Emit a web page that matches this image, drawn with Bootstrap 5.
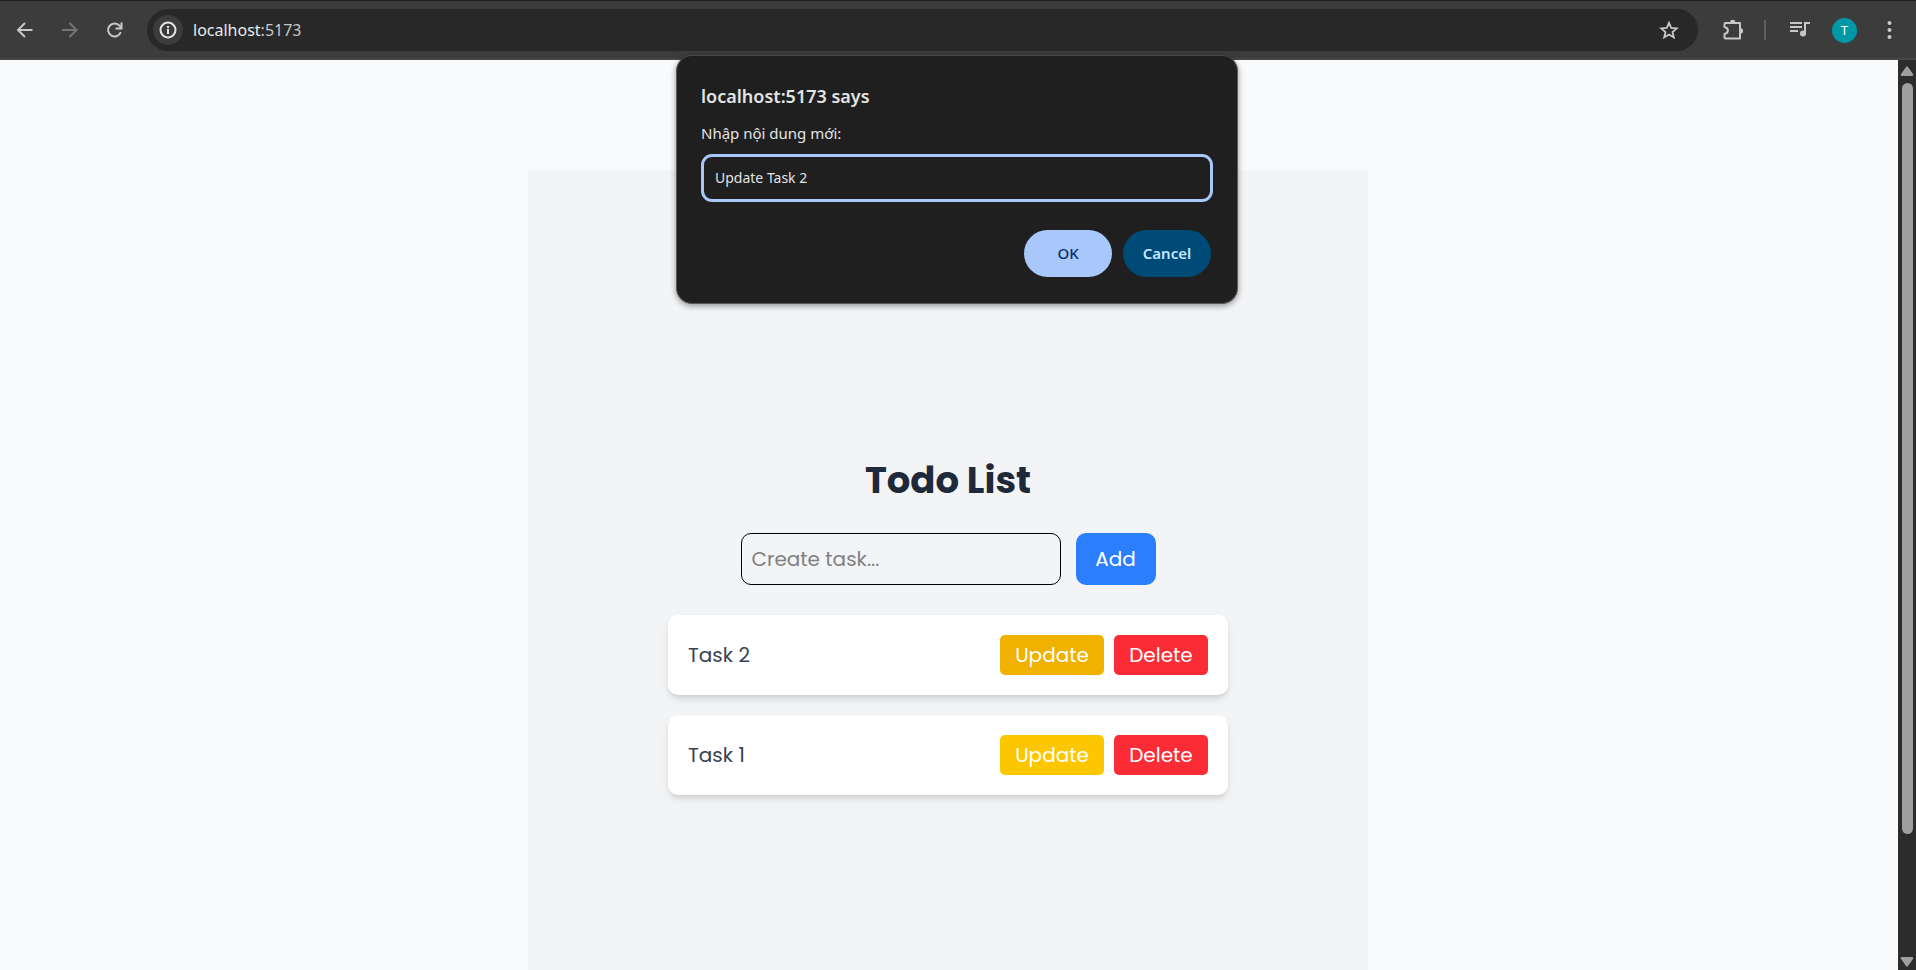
<!DOCTYPE html>
<html lang="vi">
<head>
<meta charset="utf-8">
<meta name="viewport" content="width=device-width, initial-scale=1">
<title>Todo List</title>
<link href="https://cdn.jsdelivr.net/npm/bootstrap@5.3.0/dist/css/bootstrap.min.css" rel="stylesheet">
<style>
  body { font-family: Poppins, Inter, "Noto Sans", sans-serif; font-size: 20px; line-height: 30px; background: #f9fafb; color: #364153; }
  .chrome-text { font-family: "Segoe UI", "Noto Sans", "Open Sans", sans-serif; }

  .toolbar { height: 60px; padding: 1px 14px 0 12px; gap: 21px; background: #3c3c3c; color: #c7c7c7; border-top: 1px solid #1f1f1f; border-bottom: 2px solid #474747; }
  .tool-btn { width: 24px; height: 24px; color: inherit; }
  .tool-btn svg, .site-info svg { display: block; }
  .tool-btn:disabled { color: #757575; opacity: 1; border: 0; }
  .omnibox { height: 42px; padding: 0 17px 0 6px; background: #282828; }
  .site-info { width: 30px; height: 30px; background: #3c3c3c; color: #e3e3e3; }
  .address { font-size: 16px; line-height: 24px; color: #c7c7c7; margin-left: 10px; }
  .address span { color: #e8eaed; }
  .tool-divider { width: 2px; height: 20px; background: #5e5e5e; }
  .avatar { width: 25px; height: 25px; background: #0097a7; color: #fff; font-family: Roboto, sans-serif; font-size: 13px; line-height: 25px; }

  .page-view { background: #f9fafb; padding: 110px 2px 0 0; }
  .todo-panel { width: 100%; max-width: 840px; padding: 288px 140px 0; background: #f3f4f6; }
  .todo-title { font-size: 37px; line-height: 45px; font-weight: 700; color: #1e2939; margin-bottom: 30px; }
  .todo-form { gap: 15px; margin-bottom: 30px; }
  .task-input { width: 320px; height: 52px; padding: 10px; border: 1px solid #000; border-radius: 10px; background: transparent; color: #364153; font-size: 20px; line-height: 30px; }
  .task-input::placeholder { color: #7f8083; opacity: 1; }
  .add-btn { width: 80px; height: 52px; border-radius: 10px; background: #2b7fff; color: #fff; }
  .task-list { gap: 20px; }
  .task-item { padding: 20px; border-radius: 10px; background: #fff; box-shadow: 0 5px 8px -1px rgba(0,0,0,.1), 0 3px 5px -2px rgba(0,0,0,.1); }
  .task-actions { gap: 10px; }
  .task-btn { height: 40px; border-radius: 5px; color: #fff; padding: 5px 0; }
  .update-btn { width: 104px; background: #fdc700; }
  .update-btn.is-hovered { background: #f0b100; }
  .delete-btn { width: 94px; background: #fb2c36; }

  .scroll-rail { width: 18px; background: #2c2c2c; padding: 6px 0 3px; gap: 7px; }
  .scroll-track { width: 11px; }
  .scroll-thumb { flex: 751 1 0; border-radius: 6px; background: #9f9f9f; }
  .scroll-rest { flex: 116 1 0; }

  .dialog-layer { top: 55px; left: 0; right: 0; padding-right: 2px; pointer-events: none; z-index: 10; }
  .prompt-box { width: 562px; padding: 24px 24px 26px; border: 1px solid #5a5a5a; border-top-color: #474747; border-radius: 16px; background: #1f1f1f; color: #e3e3e3; box-shadow: 0 2px 6px rgba(0,0,0,.4); pointer-events: auto; }
  .prompt-title { font-size: 18px; line-height: 32px; font-weight: 600; margin-bottom: 6px; }
  .prompt-label { font-size: 15px; line-height: 30px; margin-bottom: 6px; }
  .prompt-input { height: 48px; padding: 0 11px 2px; border: 3px solid #a8c7fa; border-radius: 11px; background: transparent; color: #e3e3e3; font-size: 14px; outline: 0; }
  .prompt-actions { gap: 11px; margin-top: 28px; padding-right: 2px; }
  .pill-btn { width: 88px; height: 47px; font-size: 15px; font-weight: 500; }
  .ok-btn { background: #a8c7fa; color: #062e6f; }
  .cancel-btn { background: #004a77; color: #c2e7ff; font-weight: 600; }
</style>
</head>
<body class="vh-100 overflow-hidden d-flex flex-column">

<header class="toolbar chrome-text d-flex align-items-center flex-shrink-0">
  <button class="tool-btn btn p-0 border-0" aria-label="Back">
    <svg width="24" height="24" fill="none" stroke="currentColor" stroke-width="2"><path d="M20.500 12H6.500M13 5L6 12l7 7"/></svg>
  </button>
  <button class="tool-btn btn p-0 border-0" aria-label="Forward" disabled>
    <svg width="24" height="24" fill="none" stroke="currentColor" stroke-width="2"><path d="M5 12h14M12.500 5l7 7-7 7"/></svg>
  </button>
  <button class="tool-btn btn p-0 border-0" aria-label="Reload">
    <svg width="24" height="24" fill="none" stroke="currentColor" stroke-width="2"><path d="M18.800 14A6.500 6.500 0 1 1 17.700 7.900L19.500 10M19.500 4.500V10.500H13.500"/></svg>
  </button>
  <div class="omnibox rounded-pill flex-grow-1 d-flex align-items-center">
    <button class="site-info btn p-0 border-0 rounded-circle d-flex align-items-center justify-content-center" aria-label="Site information">
      <svg width="18" height="18" fill="none" stroke="currentColor" stroke-width="2"><circle cx="9" cy="9" r="7.500"/><path d="M9 8v5M9 5v2"/></svg>
    </button>
    <div class="address flex-grow-1"><span>localhost</span>:5173</div>
    <button class="tool-btn btn p-0 border-0" aria-label="Bookmark">
      <svg width="24" height="24" fill="none" stroke="currentColor" stroke-width="1.800"><path d="M12 4.800l2.200 5.100 5.500.5-4.200 3.600 1.300 5.400-4.800-2.900-4.800 2.900 1.300-5.400-4.200-3.600 5.500-.5z"/></svg>
    </button>
  </div>
  <button class="tool-btn btn p-0 border-0" aria-label="Extensions">
    <svg width="24" height="24"><path fill="none" stroke="currentColor" stroke-width="2" stroke-linejoin="round" d="M6.500 5h14.500v15.500H6.500q-1 0-1-1v-3.500c4.500-1 4.500-6 0-7V6q0-1 1-1z"/><path fill="currentColor" d="M11 4.500a2.700 2.700 0 0 1 5.400 0zM21.500 10.300a2.700 2.700 0 0 1 0 5.400z"/></svg>
  </button>
  <div class="tool-divider"></div>
  <button class="tool-btn btn p-0 border-0" aria-label="Media">
    <svg width="24" height="24" fill="none" stroke="currentColor" stroke-width="2"><path d="M3 5h12M3 9h12M3 13h8M18 15.500V5h5"/><circle cx="16" cy="15.500" r="3" fill="currentColor" stroke="none"/></svg>
  </button>
  <button class="avatar btn p-0 border-0 rounded-circle" aria-label="Profile">T</button>
  <button class="tool-btn btn p-0 border-0" aria-label="Menu">
    <svg width="24" height="24" fill="currentColor"><circle cx="11.500" cy="5" r="2"/><circle cx="11.500" cy="12" r="2"/><circle cx="11.500" cy="19" r="2"/></svg>
  </button>
</header>

<div class="d-flex flex-grow-1 overflow-hidden">
  <main class="page-view flex-grow-1 d-flex justify-content-center">
    <section class="todo-panel">
      <h1 class="todo-title text-center">Todo List</h1>
      <form class="todo-form d-flex justify-content-center" onsubmit="return false">
        <input class="task-input" type="text" placeholder="Create task..." aria-label="Create task">
        <button class="add-btn border-0" type="submit">Add</button>
      </form>
      <ul class="task-list list-unstyled d-flex flex-column mb-0">
        <li class="task-item d-flex align-items-center justify-content-between">
          <span>Task 2</span>
          <div class="task-actions d-flex">
            <button class="task-btn update-btn is-hovered border-0">Update</button>
            <button class="task-btn delete-btn border-0">Delete</button>
          </div>
        </li>
        <li class="task-item d-flex align-items-center justify-content-between">
          <span>Task 1</span>
          <div class="task-actions d-flex">
            <button class="task-btn update-btn border-0">Update</button>
            <button class="task-btn delete-btn border-0">Delete</button>
          </div>
        </li>
      </ul>
    </section>
  </main>
  <div class="scroll-rail d-flex flex-column align-items-center flex-shrink-0" aria-hidden="true">
    <svg class="flex-shrink-0" width="14" height="10" fill="#9f9f9f"><path d="M6 1Q7-.5 8 1l5 7q1 2-1 2H2Q0 10 1 8z"/></svg>
    <div class="scroll-track flex-grow-1 d-flex flex-column">
      <div class="scroll-thumb"></div>
      <div class="scroll-rest"></div>
    </div>
    <svg class="flex-shrink-0" width="14" height="10" fill="#9f9f9f"><path d="M6 9q1 1.500 2 0l5-7q1-2-1-2H2Q0 0 1 2z"/></svg>
  </div>
</div>

<div class="dialog-layer position-absolute d-flex justify-content-center">
  <form class="prompt-box chrome-text" role="dialog" aria-labelledby="prompt-title" onsubmit="return false">
    <h2 class="prompt-title" id="prompt-title">localhost:5173 says</h2>
    <label class="prompt-label d-block" for="prompt-value">Nhập nội dung mới:</label>
    <input class="prompt-input d-block w-100" id="prompt-value" type="text" value="Update Task 2">
    <div class="prompt-actions d-flex justify-content-end">
      <button class="pill-btn ok-btn btn p-0 border-0 rounded-pill" type="submit">OK</button>
      <button class="pill-btn cancel-btn btn p-0 border-0 rounded-pill" type="button">Cancel</button>
    </div>
  </form>
</div>

<script src="https://cdn.jsdelivr.net/npm/bootstrap@5.3.0/dist/js/bootstrap.bundle.min.js"></script>
</body>
</html>
